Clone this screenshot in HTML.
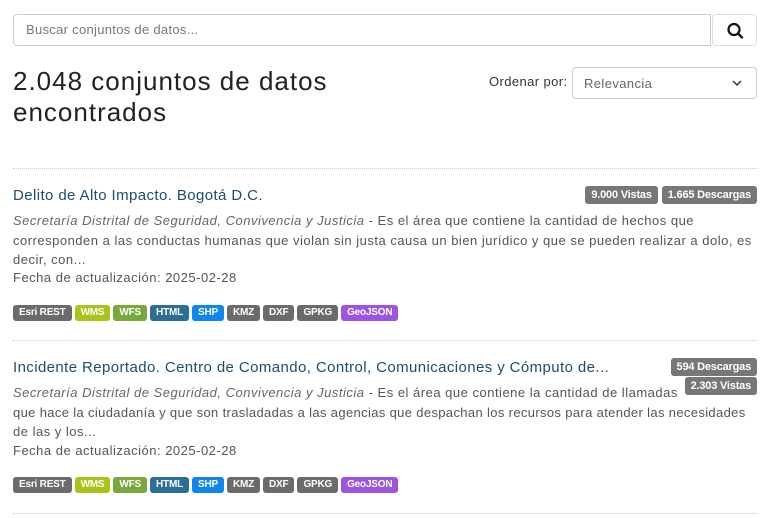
<!DOCTYPE html>
<html><head><meta charset="utf-8"><style>
*{box-sizing:border-box;margin:0;padding:0}
body{width:768px;height:518px;background:#fff;font-family:"Liberation Sans",sans-serif;color:#333;position:relative;overflow:hidden}
.a{position:absolute}
.search{left:13px;top:14px;width:698px;height:32px;border:1px solid #ccc;border-radius:4px 0 0 4px;font-size:13px;color:#777;padding:7px 12px;letter-spacing:0.3px}
.btn{left:712px;top:14px;width:45px;height:32px;border:1px solid #ddd;border-radius:4px}
h1{position:absolute;left:13px;top:66px;font-size:26px;font-weight:normal;line-height:31px;color:#222;letter-spacing:1px}
.ord{left:489px;top:74px;font-size:13px;color:#333;letter-spacing:0.4px}
.sel{left:572px;top:67px;width:185px;height:32px;border:1px solid #ccc;border-radius:4px;font-size:13px;color:#666;padding:8px 11px;letter-spacing:0.4px}
.sep{left:13px;width:744px;border-top:1px dotted #ccc}
.t{left:13px;font-size:15px;color:#1d4e6e;white-space:nowrap;letter-spacing:0.4px}
.d{left:13px;font-size:13px;line-height:19.5px;color:#555;white-space:nowrap;letter-spacing:0.5px}
.d i{color:#666}
.f{left:13px;font-size:13px;color:#555;letter-spacing:0.5px}
.bs{left:13px;display:flex;gap:3px}
.b{font-size:10px;font-weight:bold;color:#fff;background:#6b6b6b;border-radius:3px;height:16px;line-height:16px;padding:0 6px;letter-spacing:-0.2px}
.st{font-size:11px;font-weight:bold;color:#fff;background:#777;border-radius:3px;height:18px;line-height:18px;padding:0 6px;letter-spacing:-0.2px}
</style></head><body>
<div class="a search">Buscar conjuntos de datos...</div>
<div class="a btn"><svg width="45" height="32" viewBox="0 0 45 32"><circle cx="21" cy="14.5" r="5.5" fill="none" stroke="#111" stroke-width="2.2"/><line x1="25" y1="18.5" x2="29" y2="22.5" stroke="#111" stroke-width="2.4" stroke-linecap="round"/></svg></div>
<h1>2.048 conjuntos de datos<br>encontrados</h1>
<div class="a ord">Ordenar por:</div>
<div class="a sel">Relevancia<svg class="a" style="left:158px;top:11px" width="12" height="8" viewBox="0 0 12 8"><path d="M2 2l4 4 4-4" fill="none" stroke="#333" stroke-width="1.5"/></svg></div>
<div class="a sep" style="top:168px"></div>
<div class="a t" style="top:187px">Delito de Alto Impacto. Bogotá D.C.</div>
<div class="a" style="right:11px;top:186px;display:flex;gap:4px"><span class="st">9.000 Vistas</span><span class="st">1.665 Descargas</span></div>
<div class="a d" style="top:211px"><i>Secretaría Distrital de Seguridad, Convivencia y Justicia</i> - Es el área que contiene la cantidad de hechos que<br>corresponden a las conductas humanas que violan sin justa causa un bien jurídico y que se pueden realizar a dolo, es<br>decir, con...</div>
<div class="a f" style="top:270px">Fecha de actualización: 2025-02-28</div>
<div class="a bs" style="top:305px"><span class="b">Esri REST</span><span class="b" style="background:#a6c41a">WMS</span><span class="b" style="background:#79a83a">WFS</span><span class="b" style="background:#2b6f96">HTML</span><span class="b" style="background:#0f86ec">SHP</span><span class="b">KMZ</span><span class="b">DXF</span><span class="b">GPKG</span><span class="b" style="background:#9b55e0">GeoJSON</span></div>
<div class="a sep" style="top:340px"></div>
<div class="a t" style="top:359px">Incidente Reportado. Centro de Comando, Control, Comunicaciones y Cómputo de...</div>
<div class="a st" style="right:11px;top:358px">594 Descargas</div>
<div class="a st" style="right:11px;top:377px">2.303 Vistas</div>
<div class="a d" style="top:383px"><i>Secretaría Distrital de Seguridad, Convivencia y Justicia</i> - Es el área que contiene la cantidad de llamadas<br><span style="letter-spacing:0.35px">que hace la ciudadanía y que son trasladadas a las agencias que despachan los recursos para atender las necesidades</span><br>de las y los...</div>
<div class="a f" style="top:443px">Fecha de actualización: 2025-02-28</div>
<div class="a bs" style="top:477px"><span class="b">Esri REST</span><span class="b" style="background:#a6c41a">WMS</span><span class="b" style="background:#79a83a">WFS</span><span class="b" style="background:#2b6f96">HTML</span><span class="b" style="background:#0f86ec">SHP</span><span class="b">KMZ</span><span class="b">DXF</span><span class="b">GPKG</span><span class="b" style="background:#9b55e0">GeoJSON</span></div>
<div class="a sep" style="top:513px"></div>
</body></html>
